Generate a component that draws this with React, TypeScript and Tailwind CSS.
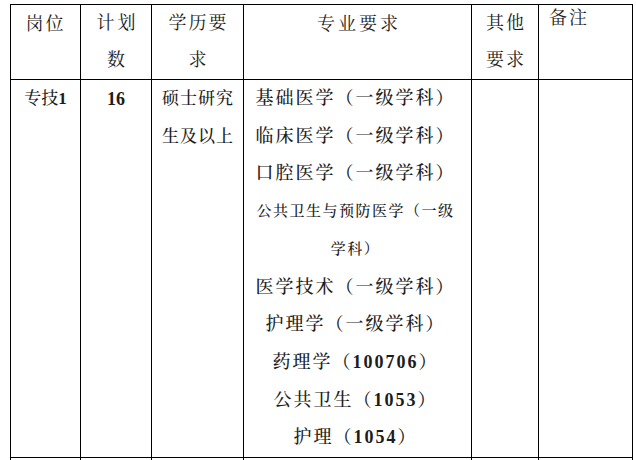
import React from "react";

const font = {
  fontFamily:
    '"Liberation Serif", "Noto Serif CJK SC", "Noto Sans CJK SC", serif',
};

const majors: { t: React.ReactNode; small?: boolean }[] = [
  { t: "基础医学（一级学科）" },
  { t: "临床医学（一级学科）" },
  { t: "口腔医学（一级学科）" },
  { t: "公共卫生与预防医学（一级", small: true },
  { t: "学科）", small: true },
  { t: "医学技术（一级学科）" },
  { t: "护理学（一级学科）" },
  { t: <>药理学（<b className="font-bold">100706</b>）</> },
  { t: <>公共卫生（<b className="font-bold">1053</b>）</> },
  { t: <>护理（<b className="font-bold">1054</b>）</> },
];

const cell = "border-[1.5px] border-black align-top p-0 text-center";

export default function App() {
  return (
    <div
      className="w-[636px] h-[460px] overflow-hidden bg-white text-[#1c1c1c] pt-[4px] pl-[10px]"
      style={font}
    >
      <table className="border-collapse table-fixed w-[622px]">
        <colgroup>
          <col className="w-[70px]" />
          <col className="w-[71px]" />
          <col className="w-[92px]" />
          <col className="w-[228px]" />
          <col className="w-[67px]" />
          <col className="w-[94px]" />
        </colgroup>
        <tbody>
          <tr className="h-[75px]">
            <td className={cell}>
              <div className="text-[18px] leading-[38px] tracking-[2px]">岗位</div>
            </td>
            <td className={cell}>
              <div className="text-[18px] leading-[37px] tracking-[3px] pl-[3px]">
                计划
                <br />数
              </div>
            </td>
            <td className={cell}>
              <div className="text-[18px] leading-[37px] tracking-[2px] pl-[2px]">
                学历要
                <br />求
              </div>
            </td>
            <td className={cell}>
              <div className="text-[18px] leading-[38px] tracking-[3px] pl-[3px]">
                专业要求
              </div>
            </td>
            <td className={cell}>
              <div className="text-[18px] leading-[37px] tracking-[2px] pl-[2px]">
                其他
                <br />
                要求
              </div>
            </td>
            <td className={cell + " text-left"}>
              <div className="text-[18px] leading-[26px] tracking-[2px] pl-[10px]">
                备注
              </div>
            </td>
          </tr>
          <tr>
            <td className={cell}>
              <div className="text-[17px] leading-[38px] font-medium">
                专技<b className="font-bold">1</b>
              </div>
            </td>
            <td className={cell}>
              <div className="text-[18px] leading-[38px] font-bold">16</div>
            </td>
            <td className={cell}>
              <div className="text-[17px] leading-[38px] tracking-[1px] pl-[1px] font-medium">
                硕士研究
                <br />
                生及以上
              </div>
            </td>
            <td className={cell}>
              <div className="flex flex-col items-center pr-[4px]">
                {majors.map((m, i) => (
                  <div
                    key={i}
                    className={
                      m.small
                        ? "text-[15px] leading-[37.7px] tracking-[1.5px] font-medium"
                        : "text-[18px] leading-[37.7px] tracking-[2px] font-medium"
                    }
                  >
                    {m.t}
                  </div>
                ))}
              </div>
            </td>
            <td className={cell}></td>
            <td className={cell}></td>
          </tr>
          <tr className="h-[40px]">
            <td className={cell}></td>
            <td className={cell}></td>
            <td className={cell}></td>
            <td className={cell}></td>
            <td className={cell}></td>
            <td className={cell}></td>
          </tr>
        </tbody>
      </table>
    </div>
  );
}
